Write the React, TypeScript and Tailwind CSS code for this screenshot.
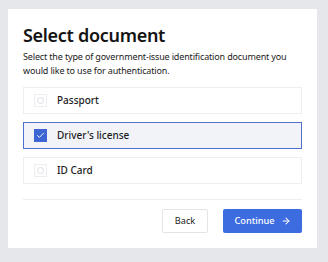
import { Check, ArrowRight } from "lucide-react";

type Option = { id: string; label: string };

const options: Option[] = [
  { id: "passport", label: "Passport" },
  { id: "license", label: "Driver's license" },
  { id: "id", label: "ID Card" },
];

const selected = "license";

export default function App() {
  return (
    <div
      className="min-h-[262px] w-full bg-[#e6e7ea] px-2 pt-[9px] text-[#1b1b1b]"
      style={{ fontFamily: '"Noto Sans", "Open Sans", sans-serif' }}
    >
      <div className="w-[309px] bg-white px-[15px] pt-[14px] pb-[15px]">
        <h1 className="text-[18px] leading-[24px] font-semibold tracking-[-0.3px] text-[#141414]">
          Select document
        </h1>
        <p className="mt-[3px] text-[9px] leading-[14px] tracking-[-0.15px] text-[#222]">
          Select the type of government-issue identification document you would like to use for authentication.
        </p>

        {/* Options */}
        <div className="mt-[9px] flex flex-col gap-2">
          {options.map((o) => {
            const active = o.id === selected;
            return (
              <div
                key={o.id}
                className={
                  active
                    ? "flex h-[27px] items-center gap-[10px] border border-[#4d72cc] bg-[#f1f3f9] px-[10px]"
                    : "flex h-[27px] items-center gap-[10px] border border-[#eceef1] bg-white px-[10px]"
                }
              >
                {active ? (
                  <span className="flex h-[13px] w-[13px] items-center justify-center bg-[#3d65d3]">
                    <Check size={9} strokeWidth={2.5} className="text-white" />
                  </span>
                ) : (
                  <span className="flex h-[13px] w-[13px] items-center justify-center border border-[#eceef1]">
                    <span className="h-[7px] w-[7px] rounded-full border border-[#dcdfe3]" />
                  </span>
                )}
                <span className="text-[10px] font-medium text-[#1d1d1d]">{o.label}</span>
              </div>
            );
          })}
        </div>

        <div className="mt-[15px] h-px bg-[#eceef1]" />

        {/* Actions */}
        <div className="mt-[9px] flex justify-end gap-[15px]">
          <button className="h-[24px] w-[46px] rounded-[2px] border border-[#e2e4e8] bg-white text-[9.2px] text-[#222]">
            Back
          </button>
          <button className="flex h-[24px] w-[79px] items-center justify-center gap-[6px] rounded-[2px] bg-[#3d6ce0] text-[9.2px] font-medium text-white">
            Continue
            <ArrowRight size={10} strokeWidth={2.5} />
          </button>
        </div>
      </div>
    </div>
  );
}
